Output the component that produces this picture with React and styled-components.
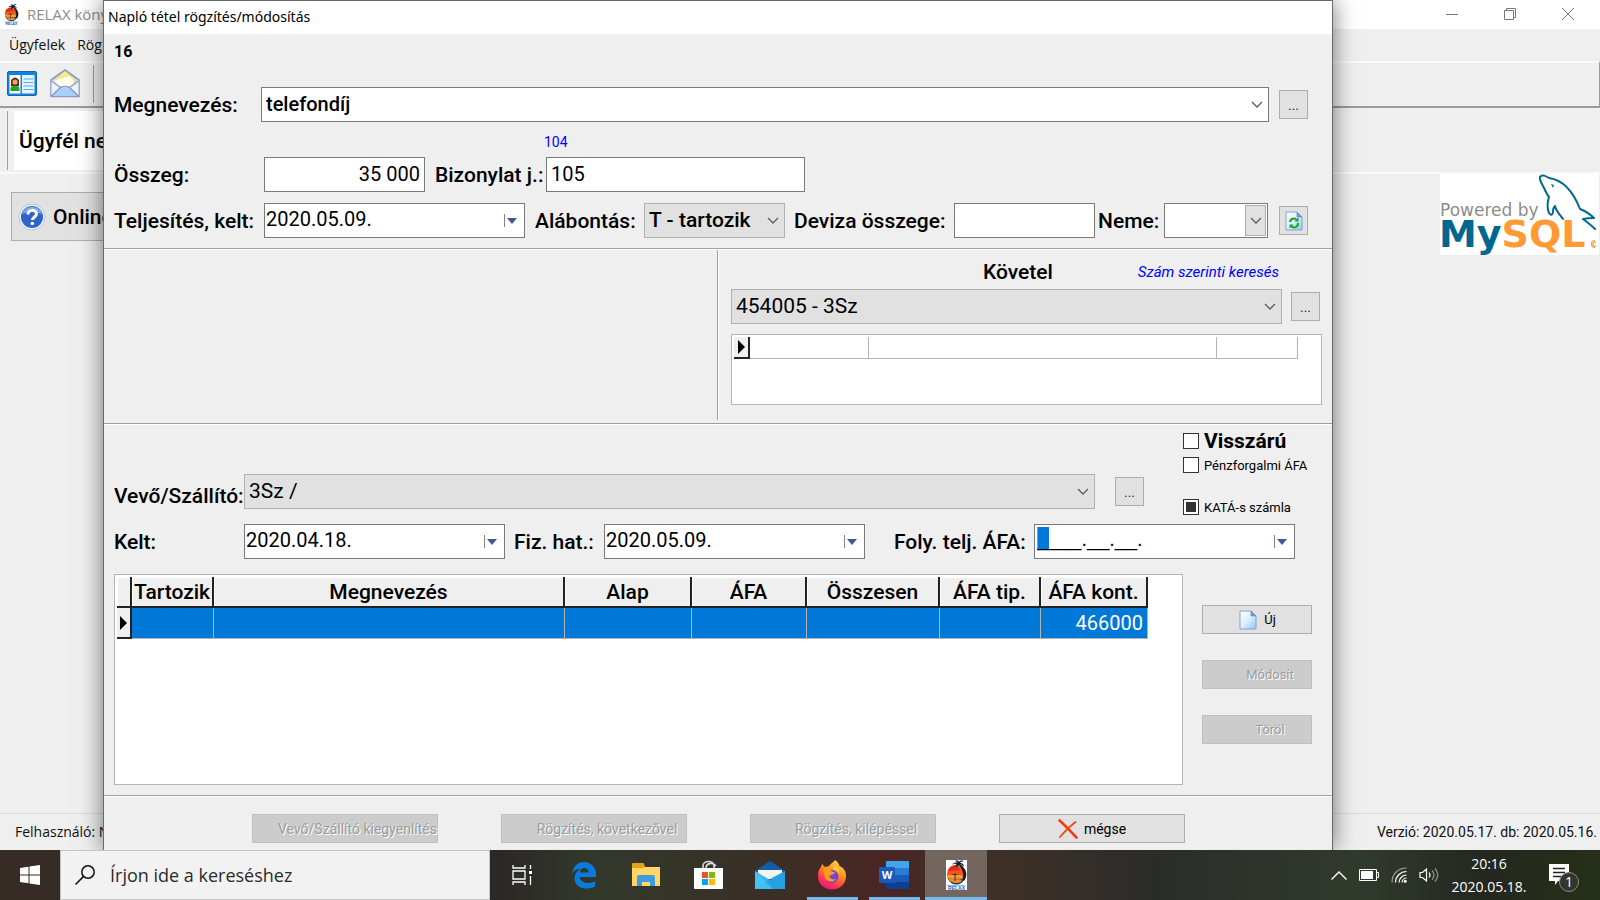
import React from "react";
import styled, { createGlobalStyle, css } from "styled-components";

const GlobalStyle = createGlobalStyle`
  *, *::before, *::after { box-sizing: border-box; }
  body { margin: 0; background: #efefef; color: #000; font-family: Roboto, "Liberation Sans", sans-serif; }
  button, input, select { font-family: inherit; color: inherit; margin: 0; border-radius: 0; outline: none; }
`;

const uiFont = `"Open Sans", "Noto Sans", sans-serif`;

/* ---------- page ---------- */

const Desktop = styled.div`
  position: relative;
  display: flex;
  flex-direction: column;
  min-height: 100vh;
  overflow: hidden;
`;

const Workspace = styled.div`
  position: relative;
  flex: 1;
  display: flex;
  flex-direction: column;
  overflow: hidden;
`;

/* ---------- main window ---------- */

const MainTitle = styled.header`
  display: flex;
  align-items: center;
  height: 29px;
  padding: 0 3px 1px 4px;
  background: #fff;
  color: #8c8c8c;
  font: 15px ${uiFont};
`;

const MainTitleText = styled.span`
  flex: 1;
  margin-left: 8px;
`;

const WindowButton = styled.button`
  display: grid;
  place-items: center;
  width: 58px;
  height: 28px;
  padding: 0;
  border: 0;
  background: none;
`;

const MenuBar = styled.nav`
  display: flex;
  gap: 12px;
  height: 32px;
  padding-left: 9px;
  font: 14px/32px ${uiFont};
`;

const MenuLink = styled.a`
  color: #111;
  text-decoration: none;
`;

const Toolbar = styled.div`
  display: flex;
  align-items: center;
  gap: 13px;
  height: 47px;
  padding: 0 0 2px 7px;
  border-top: 2px solid #fafafa;
  border-bottom: 2px solid #9a9a9a;
  border-right: 1px solid #9a9a9a;
`;

const ToolButton = styled.button`
  display: grid;
  place-items: center;
  padding: 0;
  border: 0;
  background: none;
`;

const ToolSeparator = styled.span`
  width: 1px;
  height: 38px;
  background: #a0a0a0;
`;

const ClientBar = styled.div`
  display: flex;
  height: 66px;
  padding: 3px 0 2px 7px;
  border-bottom: 2px solid #fafafa;
`;

const ClientName = styled.div`
  width: 200px;
  padding-left: 11px;
  border-left: 1px solid #a0a0a0;
  box-shadow: inset 6px 0 #efefef;
  background: #fff;
  font-size: 21px;
  font-weight: 500;
  line-height: 61px;
`;

const MainBody = styled.div`
  flex: 1;
  display: flex;
  justify-content: space-between;
  align-items: flex-start;
`;

const OnlineButton = styled.button`
  display: flex;
  align-items: center;
  gap: 7px;
  width: 200px;
  height: 49px;
  margin: 18px 0 0 11px;
  padding: 0 6px;
  border: 1px solid #adadad;
  background: #e1e1e1;
  font-size: 21px;
  font-weight: 500;
`;

const LogoBox = styled.div`
  width: 159px;
  height: 81px;
  margin-right: 1px;
  background: #fff;
`;

const StatusBar = styled.footer`
  display: flex;
  justify-content: space-between;
  height: 37px;
  padding: 0 3px 0 15px;
  border-top: 1px solid #dcdcdc;
  font: 14px/36px ${uiFont};
  color: #111;
`;

const Version = styled.span`
  font-family: Roboto, sans-serif;
`;

/* ---------- dialog ---------- */

const Dialog = styled.section`
  position: absolute;
  top: 0;
  bottom: 0;
  left: 103px;
  right: 267px;
  display: flex;
  flex-direction: column;
  border: 1px solid #6a6a6a;
  border-bottom: 0;
  background: #efefef;
  box-shadow: 0 0 22px rgba(0, 0, 0, 0.55);
`;

const DialogTitle = styled.h1`
  height: 33px;
  margin: 0;
  padding-left: 4px;
  background: #fff;
  font: 14px/31px "Noto Sans", sans-serif;
`;

const groove = css`
  border-bottom: 1px solid #a0a0a0;
  box-shadow: 0 1px #fff;
`;

const EntryPanel = styled.div`
  padding: 8px 24px 10px 10px;
  ${groove}
`;

const RecordNo = styled.div`
  margin-bottom: 25px;
  font-size: 16px;
  font-weight: 700;
  line-height: 20px;
`;

const Row = styled.div`
  display: flex;
  align-items: center;
  margin-bottom: ${(p) => p.$after || 0}px;
  padding-right: ${(p) => p.$inset || 0}px;
`;

const Label = styled.label`
  flex: none;
  width: ${(p) => p.$w}px;
  margin-left: ${(p) => p.$before || 0}px;
  font-size: 21px;
  font-weight: 500;
  line-height: 26px;
  white-space: nowrap;
`;

const Hint = styled.div`
  padding-left: 430px;
  margin: 10px 0 5px;
  color: #0000ff;
  font-size: 14px;
  line-height: 20px;
`;

const TextField = styled.input`
  width: ${(p) => p.$w}px;
  height: 35px;
  padding: 0 4px 2px;
  border: 1px solid #7a7a7a;
  background: #fff;
  font-size: 20px;
  text-align: ${(p) => (p.$right ? "right" : "left")};
`;

const SelectBox = styled.span`
  position: relative;
  display: flex;
  flex: ${(p) => (p.$w ? "none" : "1")};
  width: ${(p) => (p.$w ? p.$w + "px" : "auto")};
  height: 35px;
  color: #5a5a5a;
`;

const SelectInput = styled.select`
  width: 100%;
  padding: 0 30px 1px 4px;
  appearance: none;
  border: 1px solid ${(p) => (p.$open ? "#7a7a7a" : "#b0b0b0")};
  background: ${(p) => (p.$open ? "#fff" : "#e1e1e1")};
  color: #000;
  font-size: ${(p) => (p.$open ? 20 : 21)}px;
  font-weight: ${(p) => (p.$medium ? 500 : 400)};
`;

const SelectArrow = styled.span`
  position: absolute;
  top: 2px;
  bottom: 2px;
  right: 2px;
  display: grid;
  place-items: center;
  width: 21px;
  border: ${(p) => (p.$boxed ? "1px solid #adadad" : "0")};
  background: ${(p) => (p.$boxed ? "#e1e1e1" : "none")};
  pointer-events: none;
`;

const DateBox = styled.span`
  flex: none;
  display: flex;
  width: 261px;
  height: 35px;
  border: 1px solid #7a7a7a;
  background: #fff;
`;

const DateInput = styled.input`
  flex: 1;
  min-width: 0;
  padding: 0 0 4px 1px;
  border: 0;
  background: none;
  font-size: 20px;
  ${(p) =>
    p.$masked &&
    css`
      padding-left: 2px;
      font-family: "Liberation Sans", sans-serif;
      background: linear-gradient(90deg, #e8842c 1px, #0078d7 1px) 2px 2px / 12px 23px no-repeat;
    `}
`;

const DateButton = styled.button`
  width: 20px;
  padding: 0 4px 2px 0;
  border: 0;
  background: linear-gradient(#8a8080, #8a8080) 0 10px / 1px 13px no-repeat;
`;

const SquareButton = styled.button`
  flex: none;
  display: grid;
  place-items: center;
  width: 29px;
  height: 29px;
  margin-left: ${(p) => p.$before}px;
  padding: 0;
  border: 1px solid #adadad;
  background: #e1e1e1;
  color: #333;
  font-size: 14px;
`;

const AccountPanel = styled.div`
  display: flex;
  height: 175px;
  ${groove}
`;

const DebitSide = styled.div`
  width: 614px;
  margin: 1px 0 3px;
  border-right: 1px solid #a0a0a0;
  box-shadow: 1px 0 #fff;
`;

const CreditSide = styled.div`
  flex: 1;
  padding: 10px 10px 0 13px;
`;

const CreditHead = styled.div`
  display: flex;
  justify-content: flex-end;
  align-items: center;
  gap: 85px;
  height: 26px;
  margin-bottom: 4px;
  padding-right: 43px;
`;

const CreditTitle = styled.h2`
  margin: 0;
  font-size: 21px;
  font-weight: 500;
  line-height: 26px;
`;

const SearchLink = styled.a`
  color: #0000ff;
  font-size: 15px;
  font-style: italic;
  text-decoration: none;
`;

const Sheet = styled.div`
  flex: 1;
  height: ${(p) => (p.$h ? p.$h + "px" : "auto")};
  padding: 2px;
  border: 1px solid #b4b4bc;
  background: #fff;
  overflow: hidden;
`;

const Table = styled.table`
  width: ${(p) => p.$w}px;
  table-layout: fixed;
  border-collapse: separate;
  border-spacing: 0;
  font-size: 21px;
`;

const HeadCell = styled.th`
  height: 31px;
  padding: 0;
  border: solid #222;
  border-width: 0 2px 2px 0;
  background: #efefef;
  box-shadow: inset 1px 1px #fff;
  font-weight: 500;
  line-height: 24px;
  white-space: nowrap;
`;

const MarkCell = styled.td`
  height: ${(p) => p.$h}px;
  padding: 0;
  border: solid #222;
  border-width: 0 2px 2px 0;
  background: #efefef;
  line-height: 0;
  text-align: center;
`;

const Cell = styled.td`
  padding: 0 4px 0 0;
  border: solid #b4b4b4;
  border-width: 0 1px 1px 0;
  background: ${(p) => (p.$selected ? "#0078d7" : "#fff")};
  color: ${(p) => (p.$selected ? "#fff" : "#000")};
  font-size: 20px;
  line-height: 24px;
  text-align: right;
`;

const VatPanel = styled.div`
  flex: 1;
  display: flex;
  flex-direction: column;
  padding: 1px 0 10px 10px;
  ${groove}
`;

const PartnerRow = styled.div`
  display: flex;
  height: 99px;
`;

const Partner = styled.div`
  flex: 1;
  display: flex;
  align-items: flex-end;
  height: 84px;
`;

const PartnerButton = styled.span`
  align-self: flex-end;
  margin-bottom: 3px;
`;

const Checks = styled.div`
  width: 149px;
  margin-left: 39px;
  padding-top: 8px;
`;

const CheckLabel = styled.label`
  display: flex;
  align-items: center;
  gap: 5px;
  height: 16px;
  margin-bottom: ${(p) => p.$after || 0}px;
  font-size: ${(p) => (p.$strong ? 21 : 13)}px;
  font-weight: ${(p) => (p.$strong ? 700 : 400)};
  white-space: nowrap;
`;

const CheckInput = styled.input`
  width: 16px;
  height: 16px;
  appearance: none;
  border: 1px solid #333;
  background: ${(p) =>
    p.$mixed ? "linear-gradient(#333, #333) center / 10px 10px no-repeat, #fff" : "#fff"};
`;

const LinesRow = styled.div`
  flex: 1;
  display: flex;
  margin-top: 15px;
`;

const LineActions = styled.div`
  display: flex;
  flex-direction: column;
  gap: 26px;
  width: 149px;
  padding: 31px 20px 0 19px;
`;

const ActionButton = styled.button`
  display: flex;
  align-items: center;
  justify-content: center;
  gap: 6px;
  width: ${(p) => (p.$wide ? 186 : 110)}px;
  height: 29px;
  padding: 0;
  border: 1px solid #adadad;
  background: #e1e1e1;
  font-size: ${(p) => (p.$wide ? 14 : 13)}px;
  white-space: nowrap;
  &:disabled {
    border-color: #c0c0c0;
    background: #cccccc;
    color: #9c9c9c;
    text-shadow: 1px 1px #fff;
  }
`;

const IconSlot = styled.span`
  display: grid;
  place-items: center;
  width: 20px;
  height: 20px;
`;

const DialogFooter = styled.div`
  display: flex;
  gap: 63px;
  height: 54px;
  padding: 18px 0 0 148px;
`;

/* ---------- taskbar ---------- */

const Taskbar = styled.footer`
  position: relative;
  display: flex;
  height: 50px;
  background: linear-gradient(90deg, #372c25 0, #2b2825 31%, #32382c 37%, #3a2f26 48%, #4a2623 55%, #3f3026 62%, #2b2c2a 72%, #303a2c 85%, #24271f 93%, #263018 100%);
  color: #fff;
`;

const StartButton = styled.button`
  width: 60px;
  padding: 0;
  border: 0;
  background: none;
  line-height: 0;
`;

const SearchBox = styled.label`
  display: flex;
  align-items: center;
  gap: 15px;
  width: 430px;
  padding-left: 14px;
  border: 1px solid #c4c4c4;
  background: #f2f2f2;
`;

const SearchInput = styled.input`
  flex: 1;
  border: 0;
  padding: 0 0 1px;
  background: none;
  font: 18px ${uiFont};
  &::placeholder { color: #2b2b2b; opacity: 1; }
`;

const Apps = styled.div`
  display: flex;
  flex: 1;
  padding-left: 1px;
`;

const AppButton = styled.button`
  display: grid;
  place-items: center;
  width: 62px;
  height: 50px;
  padding: 0;
  border: 0;
  background:
    linear-gradient(#76b9ed, #76b9ed) bottom / ${(p) => (p.$active ? "62px" : p.$open ? "51px" : "0")} 3px no-repeat,
    ${(p) => (p.$active ? "#72665f" : "transparent")};
`;

const Tray = styled.div`
  display: flex;
  align-items: center;
  padding-right: 6px;
`;

const TrayButton = styled.button`
  display: grid;
  place-items: center;
  width: ${(p) => p.$w || 30}px;
  padding: 0;
  border: 0;
  background: none;
`;

const Clock = styled.time`
  width: 90px;
  font: 14px/23px ${uiFont};
  text-align: center;
`;

/* ---------- drawings ---------- */

const Chevron = () => (
  <svg width="12" height="8" viewBox="0 0 12 8" fill="none" stroke="#606060" strokeWidth="1.4">
    <path d="M1 1l5 5 5-5" />
  </svg>
);

const DateArrow = () => (
  <svg width="10" height="6" viewBox="0 0 10 6"><path d="M0 0h10L5 6z" fill="#41598c" /></svg>
);

const Marker = () => (
  <svg width="9" height="14" viewBox="0 0 9 14"><path d="M1 0l7 7-7 7z" /></svg>
);

const PageIcon = ({ refresh }) => (
  <svg width="18" height="20" viewBox="0 0 18 20">
    <defs>
      <linearGradient id="pg" x1="0" y1="0" x2="1" y2="1">
        <stop offset="0" stopColor="#fff" /><stop offset=".5" stopColor="#dcefff" /><stop offset="1" stopColor="#8cc4f4" />
      </linearGradient>
    </defs>
    <path d="M1 1h11l5 5v13H1z" fill="url(#pg)" stroke="#8c9ed0" />
    <path d="M12 1v5h5z" fill="#6d9ce0" stroke="#5b82c8" strokeWidth=".6" />
    {refresh && (
      <g fill="none" stroke="#18a428" strokeWidth="2">
        <path d="M5 11a4 4 0 0 1 7-2M13 12a4 4 0 0 1-7 3" />
        <path d="M13.500 6.500v4h-4zM4.500 17.500v-4h4z" fill="#18a428" stroke="none" />
      </g>
    )}
  </svg>
);

const CrossIcon = () => (
  <svg width="20" height="20" viewBox="0 0 20 20" fill="none" strokeLinecap="round">
    <path d="M1.500 1.500C7 6 12 12 18.500 18.500" stroke="#f23a0c" strokeWidth="2.600" />
    <path d="M17.500 3C12 7 6 13 2 18" stroke="#f2471c" strokeWidth="1.800" />
  </svg>
);

const RelaxIcon = ({ w, h }) => (
  <svg width={w} height={h} viewBox="0 0 21 30">
    <path d="M0 0h21v30H0z" fill="#fff" />
    <circle cx="10.500" cy="14.500" r="9.500" fill="#f2551f" />
    <path d="M1.500 11C3 7 6 5 10 5l4 5z" fill="#e02c1a" />
    <path d="M1 15h15l1 4H2z" fill="#f99c26" />
    <path d="M1.500 18c5 2 10 0 17 1-2 4-5 5.500-8 5.500-4 0-7-2-9-6.500z" fill="#1d3d70" />
    <path d="M2 18.500c5 1.500 9 0 13 1 2 1-1 3.500-4 3.500-4 0-7-1-9-4.500z" fill="#ff8a24" />
    <path d="M12 4c4 4 6.500 9 4.500 16l2 .5c3-5 2-10-1-13-1-2-3-3.500-5.500-3.500z" fill="#161a2c" />
    <path d="M6 5c1-2 3-3 6-2-1-1-2-2-3-2 2-1 4 0 4 1 1-2 4-2 5-.5-2-.5-3 .5-4 1.500 3 0 4 2 4 4-1-2-3-3-5-2-1 1-2 2-4 2 1-1 2-2 1-3-1-.5-3 0-4 1z" fill="#10182c" />
    <path d="M5.500 15l3.500-1.500 3.500 1.500zM8.600 15h.9v6h-.9z" fill="#3b2635" />
    <path d="M1 25l3 1 3-1 4 1 4-1 4 1" fill="none" stroke="#59b7e8" />
    <text x="10.500" y="30" fontFamily="Liberation Sans, sans-serif" fontWeight="700" fontSize="5" textAnchor="middle" fill="#1c62b0">RELAX</text>
  </svg>
);

const ContactsIcon = () => (
  <svg width="30" height="25" viewBox="0 0 30 25">
    <rect x=".5" y=".5" width="29" height="24" rx="1.500" fill="#1583dc" stroke="#0f66bb" />
    <rect x="2.500" y="4" width="11" height="18.500" fill="#fff" />
    <rect x="15" y="4" width="12.500" height="18.500" fill="#e6f4ff" />
    <path d="M16.500 8h10M16.500 11.500h10M16.500 15h10M16.500 18.500h10" stroke="#55a9ea" strokeWidth="1.200" />
    <path d="M4 9q4-5 8 0v6H4z" fill="#5a2c10" />
    <circle cx="8" cy="11" r="2.600" fill="#e9a46c" />
    <path d="M3.500 20v-3c1-3 8-3 9 0v3z" fill="#25a32b" />
  </svg>
);

const MailOpenIcon = () => (
  <svg width="30" height="29" viewBox="0 0 30 29" strokeLinejoin="round">
    <path d="M1 11L15 1l14 10v16.500H1z" fill="#d6e8fb" stroke="#8f98c8" strokeWidth="1.600" />
    <path d="M5 10l10-8 10 8v5l-10 3-10-3z" fill="#f7ec8c" stroke="#c9bd70" strokeWidth=".6" />
    <path d="M4 12l15-5 5 5v4l-9 3-9-3z" fill="#fffdf0" />
    <path d="M1.500 12l9 6.500L1.500 27M28.500 12l-9 6.500 9 8.500M2 27l9-8.500q4-2 8 0L28 27" fill="#e9f4ff" stroke="#8f98c8" strokeWidth="1.500" />
    <path d="M3 27l8.500-7.500q3.500-1.500 7 0L27 27z" fill="#a6d0f8" />
  </svg>
);

const HelpIcon = () => (
  <svg width="28" height="28" viewBox="0 0 28 28">
    <circle cx="14" cy="14" r="13" fill="#eef3fb" stroke="#b9c6de" />
    <circle cx="14" cy="14" r="11" fill="#2e63c8" />
    <path d="M4 11a10.500 10.500 0 0 1 20 0q-10-4-20 0z" fill="#7fa5ea" />
    <path d="M10 11.500c0-5.500 8.500-5.500 8.500-.5 0 3-4 3-4 6" fill="none" stroke="#fff" strokeWidth="3" />
    <circle cx="14.300" cy="20.500" r="1.800" fill="#fff" />
  </svg>
);

const MySqlLogo = () => (
  <svg width="159" height="81" viewBox="0 0 159 81">
    <text x="0" y="42" fontFamily="DejaVu Sans, sans-serif" fontSize="17" fill="#8c8c8c">Powered by</text>
    <text x="-1" y="73" fontFamily="DejaVu Sans, sans-serif" fontWeight="700" fontSize="38">
      <tspan fill="#00678f">My</tspan><tspan fill="#ff9a35">SQL</tspan>
    </text>
    <g fill="none" stroke="#ff9a35" strokeWidth="1.200">
      <path d="M155 66.500a3.500 3.500 0 1 0 0 7M156 68.500a2 2 0 1 0 0 3.500" />
    </g>
    <g fill="none" stroke="#00678f" strokeWidth="2" strokeLinejoin="round" strokeLinecap="round">
      <path d="M100 3c2-3 6-1 9 1 14 2 24 13 31 31 5 2 10 5 14 9-4 0-7 0-11 1 4 3 9 7 12 10" />
      <path d="M100 3c-1 3 2 7 4 11 2 4 3 7 5 9-2 6-2 11 0 16 2 3 4 2 4-2 0-3 1-4 2-5 1 5 5 9 8 13" />
    </g>
    <path d="M111 10l3 1-1 3z" fill="#00678f" />
  </svg>
);

const EdgeIcon = () => (
  <svg width="26" height="28" viewBox="0 0 26 28">
    <path d="M1 13C2 5 7 1 13 1c7 0 12 5 12 12v3H9c0 4 4 6 8 6 3 0 5-.6 7-1.800v5.300C21 27 18 27.500 15 27.500 8 27.500 3.500 23 3.500 17c0-4 2-7 6-9C5 8 2.500 10 1 13zm8-1.500h8.500C17.500 8.500 16 7 13.500 7S9.300 8.500 9 11.500z" fill="#0a7bdc" />
  </svg>
);

const FolderIcon = () => (
  <svg width="28" height="24" viewBox="0 0 28 24">
    <path d="M0 1h11l2 3h15v19H0z" fill="#ffd667" />
    <path d="M0 1q0-1 1-1h10q1 0 1 1l1 3-2 1H0z" fill="#e3a21a" />
    <path d="M5 23V14q0-2 2-2h14q2 0 2 2v9h-5v-4h-8v4z" fill="#3d9be0" />
  </svg>
);

const StoreIcon = () => (
  <svg width="29" height="30" viewBox="0 0 29 30">
    <path d="M9 10V6c0-6 11-6 11 0v4M12 8c0-5 7-6 10-2" fill="none" stroke="#ddd" strokeWidth="1.600" />
    <path d="M0 8h29v20q0 1-1 1H1q-1 0-1-1z" fill="#fff" />
    <path d="M8 12h6v6H8z" fill="#f25022" /><path d="M15 12h6v6h-6z" fill="#7fba00" />
    <path d="M8 19h6v6H8z" fill="#00a4ef" /><path d="M15 19h6v6h-6z" fill="#ffb900" />
  </svg>
);

const MailIcon = () => (
  <svg width="30" height="28" viewBox="0 0 30 28">
    <path d="M0 10L15 0l15 10v3H0z" fill="#0f5fa8" />
    <path d="M3 9h24v9H3z" fill="#f4f4f4" />
    <path d="M0 10l15 9 15-9v18H0z" fill="#31b7ee" />
    <path d="M0 28L18 16 30 10v18z" fill="#1b93dc" opacity=".6" />
    <path d="M0 10l18 18H0z" fill="#4ecbf5" opacity=".7" />
  </svg>
);

const FirefoxIcon = () => (
  <svg width="30" height="30" viewBox="0 0 30 30">
    <defs>
      <linearGradient id="ff" x1=".8" y1="0" x2=".3" y2="1">
        <stop offset="0" stopColor="#ffe14a" /><stop offset=".45" stopColor="#ff8a1e" /><stop offset=".75" stopColor="#ff3750" /><stop offset="1" stopColor="#e31587" />
      </linearGradient>
    </defs>
    <path d="M18 0c3 2 4 4 4.500 6C27 8 29.500 12 29 17c-.6 7-6 12.500-14 12.500S1 24 1 16c0-4 1-7 3-9l1-3 3 3 4-1c2-3 4-3 6-6z" fill="url(#ff)" />
    <circle cx="15" cy="16.500" r="6.500" fill="#7446d6" />
    <path d="M6 9c3-2 6-1 8 2 2 1 3 1 4 1-1 3-4 3-6 4 1 3 4 4 7 3-3 4-9 3-11-1-1-3-1-5-2-9z" fill="#ff9a20" />
    <path d="M16 10c3-1 6 2 6 5 1-4-1-8-4-10-1 2-2 3-2 5z" fill="#ffcf3c" />
  </svg>
);

const WordIcon = () => (
  <svg width="30" height="28" viewBox="0 0 30 28">
    <path d="M7 1q0-1 1-1h21q1 0 1 1v6H7z" fill="#41a5ee" />
    <path d="M7 7h23v7H7z" fill="#2b7cd3" /><path d="M7 14h23v7H7z" fill="#185abd" />
    <path d="M7 21h23v6q0 1-1 1H8q-1 0-1-1z" fill="#103f91" />
    <rect y="6" width="16" height="16" rx="1" fill="#185abd" />
    <text x="8" y="18" fontFamily="Open Sans, sans-serif" fontSize="11" fontWeight="700" textAnchor="middle" fill="#fff">W</text>
  </svg>
);

const TaskViewIcon = () => (
  <svg width="21" height="20" viewBox="0 0 21 20" fill="none" stroke="#fff" strokeWidth="1.300">
    <path d="M1 0v3h12V0M1 6h12v8H1zM1 20v-3h12v3M18.500 0v4M18.500 11v9" /><path d="M17 6h3v3h-3z" fill="#fff" stroke="none" />
  </svg>
);

/* ---------- reusable parts ---------- */

function Combo({ id, value, label, w, open, boxed, medium }) {
  return (
    <SelectBox $w={w}>
      <SelectInput id={id} aria-label={label} $open={open} $medium={medium} defaultValue={value}>
        <option>{value}</option>
      </SelectInput>
      <SelectArrow $boxed={boxed}><Chevron /></SelectArrow>
    </SelectBox>
  );
}

function DateField({ id, value, masked }) {
  return (
    <DateBox>
      <DateInput id={id} defaultValue={value} $masked={masked} />
      <DateButton aria-label="Naptár"><DateArrow /></DateButton>
    </DateBox>
  );
}

const lineColumns = [
  ["Tartozik", 82],
  ["Megnevezés", 351],
  ["Alap", 127],
  ["ÁFA", 115],
  ["Összesen", 133],
  ["ÁFA tip.", 101],
  ["ÁFA kont.", 107],
];

export default function App() {
  return (
    <Desktop>
      <GlobalStyle />
      <Workspace>
        <MainTitle>
          <RelaxIcon w={15} h={21} />
          <MainTitleText>RELAX köny</MainTitleText>
          <WindowButton aria-label="Kis méret">
            <svg width="12" height="12" stroke="#777"><path d="M0 6.500h12" /></svg>
          </WindowButton>
          <WindowButton aria-label="Előző méret">
            <svg width="12" height="12" fill="none" stroke="#777"><path d="M.5 2.500h9v9h-9zM2.500 2.500v-2h9v9h-2" /></svg>
          </WindowButton>
          <WindowButton aria-label="Bezárás">
            <svg width="12" height="12" stroke="#777"><path d="M0 0l12 12M12 0L0 12" /></svg>
          </WindowButton>
        </MainTitle>
        <MenuBar>
          <MenuLink href="#ugyfelek">Ügyfelek</MenuLink>
          <MenuLink href="#rogzites">Rög</MenuLink>
        </MenuBar>
        <Toolbar>
          <ToolButton aria-label="Ügyfelek"><ContactsIcon /></ToolButton>
          <ToolButton aria-label="Levél"><MailOpenIcon /></ToolButton>
          <ToolSeparator />
        </Toolbar>
        <ClientBar><ClientName>Ügyfél ne</ClientName></ClientBar>
        <MainBody>
          <OnlineButton><HelpIcon />Online</OnlineButton>
          <LogoBox><MySqlLogo /></LogoBox>
        </MainBody>
        <StatusBar>
          <span>Felhasználó: N</span>
          <Version>Verzió: 2020.05.17. db: 2020.05.16.</Version>
        </StatusBar>

        <Dialog role="dialog" aria-labelledby="dialog-title">
          <DialogTitle id="dialog-title">Napló tétel rögzítés/módosítás</DialogTitle>
          <EntryPanel>
            <RecordNo>16</RecordNo>
            <Row>
              <Label htmlFor="name" $w={147}>Megnevezés:</Label>
              <Combo id="name" value="telefondíj" open medium />
              <SquareButton $before={10}>...</SquareButton>
            </Row>
            <Hint>104</Hint>
            <Row $after={11}>
              <Label htmlFor="amount" $w={150}>Összeg:</Label>
              <TextField id="amount" $w={161} $right defaultValue="35 000" />
              <Label htmlFor="voucher" $w={111} $before={10}>Bizonylat j.:</Label>
              <TextField id="voucher" $w={259} defaultValue="105" />
            </Row>
            <Row>
              <Label htmlFor="done" $w={150}>Teljesítés, kelt:</Label>
              <DateField id="done" value="2020.05.09." />
              <Label htmlFor="split" $w={109} $before={10}>Alábontás:</Label>
              <Combo id="split" value="T - tartozik" w={141} medium />
              <Label htmlFor="currency" $w={160} $before={9}>Deviza összege:</Label>
              <TextField id="currency" $w={141} />
              <Label htmlFor="kind" $w={66} $before={3}>Neme:</Label>
              <Combo id="kind" value="" w={104} open boxed />
              <SquareButton $before={11} aria-label="Frissítés"><PageIcon refresh /></SquareButton>
            </Row>
          </EntryPanel>

          <AccountPanel>
            <DebitSide />
            <CreditSide>
              <CreditHead>
                <CreditTitle>Követel</CreditTitle>
                <SearchLink href="#kereses">Szám szerinti keresés</SearchLink>
              </CreditHead>
              <Row $after={10} $inset={2}>
                <Combo label="Követel" value="454005 - 3Sz" />
                <SquareButton $before={9}>...</SquareButton>
              </Row>
              <Sheet $h={71}>
                <Table $w={564}>
                  <colgroup><col width="16" /><col width="119" /><col width="348" /><col width="81" /></colgroup>
                  <tbody>
                    <tr><MarkCell $h={22}><Marker /></MarkCell><Cell /><Cell /><Cell /></tr>
                  </tbody>
                </Table>
              </Sheet>
            </CreditSide>
          </AccountPanel>

          <VatPanel>
            <PartnerRow>
              <Partner>
                <Label htmlFor="partner" $w={130}>Vevő/Szállító:</Label>
                <Combo id="partner" value="3Sz /" />
                <PartnerButton><SquareButton $before={20}>...</SquareButton></PartnerButton>
              </Partner>
              <Checks>
                <CheckLabel $strong $after={8}><CheckInput type="checkbox" />Visszárú</CheckLabel>
                <CheckLabel $after={26}><CheckInput type="checkbox" />Pénzforgalmi ÁFA</CheckLabel>
                <CheckLabel><CheckInput type="checkbox" $mixed />KATÁ-s számla</CheckLabel>
              </Checks>
            </PartnerRow>
            <Row>
              <Label htmlFor="dated" $w={130}>Kelt:</Label>
              <DateField id="dated" value="2020.04.18." />
              <Label htmlFor="due" $w={90} $before={9}>Fiz. hat.:</Label>
              <DateField id="due" value="2020.05.09." />
              <Label htmlFor="vatdate" $w={140} $before={29}>Foly. telj. ÁFA:</Label>
              <DateField id="vatdate" value="____.__.__." masked />
            </Row>
            <LinesRow>
              <Sheet>
                <Table $w={1031}>
                  <colgroup>
                    <col width="15" />
                    {lineColumns.map(([name, w]) => <col key={name} width={w} />)}
                  </colgroup>
                  <thead>
                    <tr>
                      <HeadCell />
                      {lineColumns.map(([name]) => <HeadCell key={name}>{name}</HeadCell>)}
                    </tr>
                  </thead>
                  <tbody>
                    <tr>
                      <MarkCell $h={31}><Marker /></MarkCell>
                      {lineColumns.map(([name]) => (
                        <Cell key={name} $selected>{name === "ÁFA kont." ? "466000" : ""}</Cell>
                      ))}
                    </tr>
                  </tbody>
                </Table>
              </Sheet>
              <LineActions>
                <ActionButton><IconSlot><PageIcon /></IconSlot>Új</ActionButton>
                <ActionButton disabled><IconSlot />Módosít</ActionButton>
                <ActionButton disabled><IconSlot />Töröl</ActionButton>
              </LineActions>
            </LinesRow>
          </VatPanel>

          <DialogFooter>
            <ActionButton $wide disabled><IconSlot />Vevő/Szállító kiegyenlítés</ActionButton>
            <ActionButton $wide disabled><IconSlot />Rögzítés, következővel</ActionButton>
            <ActionButton $wide disabled><IconSlot />Rögzítés, kilépéssel</ActionButton>
            <ActionButton $wide><IconSlot><CrossIcon /></IconSlot>mégse</ActionButton>
          </DialogFooter>
        </Dialog>
      </Workspace>

      <Taskbar>
        <StartButton aria-label="Start">
          <svg width="20" height="20" viewBox="0 0 20 20" fill="#fff">
            <path d="M0 3l8.500-1.200v7.700H0zM9.500 1.600L20 0v9.500H9.500zM0 10.500h8.500v7.700L0 17zM9.500 10.500H20V20L9.500 18.400z" />
          </svg>
        </StartButton>
        <SearchBox>
          <svg width="20" height="20" viewBox="0 0 20 20" fill="none" stroke="#111" strokeWidth="1.500">
            <circle cx="13" cy="7" r="6.200" /><path d="M8.600 11.400L.5 19.500" />
          </svg>
          <SearchInput placeholder="Írjon ide a kereséshez" />
        </SearchBox>
        <Apps>
          <AppButton aria-label="Feladatnézet"><TaskViewIcon /></AppButton>
          <AppButton aria-label="Edge"><EdgeIcon /></AppButton>
          <AppButton aria-label="Fájlkezelő"><FolderIcon /></AppButton>
          <AppButton aria-label="Áruház"><StoreIcon /></AppButton>
          <AppButton aria-label="Posta"><MailIcon /></AppButton>
          <AppButton aria-label="Firefox" $open><FirefoxIcon /></AppButton>
          <AppButton aria-label="Word" $open><WordIcon /></AppButton>
          <AppButton aria-label="RELAX" $active><RelaxIcon w={21} h={30} /></AppButton>
        </Apps>
        <Tray>
          <TrayButton aria-label="Rejtett ikonok">
            <svg width="16" height="9" fill="none" stroke="#fff" strokeWidth="1.400"><path d="M.5 8.500L8 1l7.500 7.500" /></svg>
          </TrayButton>
          <TrayButton aria-label="Akkumulátor">
            <svg width="20" height="12" fill="none" stroke="#fff"><path d="M.5.5h17v11H.5zM18 3.500h1.500v5H18" /><path d="M2 2h12v8H2z" fill="#fff" stroke="none" /></svg>
          </TrayButton>
          <TrayButton aria-label="Wi-Fi">
            <svg width="16" height="16" viewBox="0 0 16 16" fill="none" stroke="#fff" strokeWidth="1.200">
              <path d="M1 15.500C1 7 7 1 15.500 1" opacity=".55" /><path d="M4.500 15.500c0-6 5-11 11-11M8 15.500c0-4 3.500-7.500 7.500-7.500M11 15.500c0-2.500 2-4.500 4.500-4.500" /><circle cx="14.200" cy="14.200" r="1.500" fill="#fff" stroke="none" />
            </svg>
          </TrayButton>
          <TrayButton aria-label="Hangerő">
            <svg width="20" height="16" viewBox="0 0 20 16" fill="none" stroke="#fff" strokeWidth="1.200">
              <path d="M1 5.500h2.500L7.500 2v12l-4-3.500H1zM10 5.500q2 2.500 0 5" /><path d="M13 3.500q4 4.500 0 9M16 1.500q5.500 6.500 0 13" opacity=".5" />
            </svg>
          </TrayButton>
          <Clock>20:16<br />2020.05.18.</Clock>
          <TrayButton $w={60} aria-label="Értesítések">
            <svg width="32" height="34" viewBox="0 0 32 34">
              <path d="M1 6h20v17H10l-3 4v-4H1z" fill="#fff" />
              <path d="M5 10.500h12M5 14.500h12M5 18.500h8" stroke="#222" strokeWidth="1.300" />
              <circle cx="21" cy="24" r="9.500" fill="#33352f" stroke="#8a8a85" />
              <text x="21" y="29" fontFamily="Open Sans, sans-serif" fontSize="14" textAnchor="middle" fill="#fff">1</text>
            </svg>
          </TrayButton>
        </Tray>
      </Taskbar>
    </Desktop>
  );
}
